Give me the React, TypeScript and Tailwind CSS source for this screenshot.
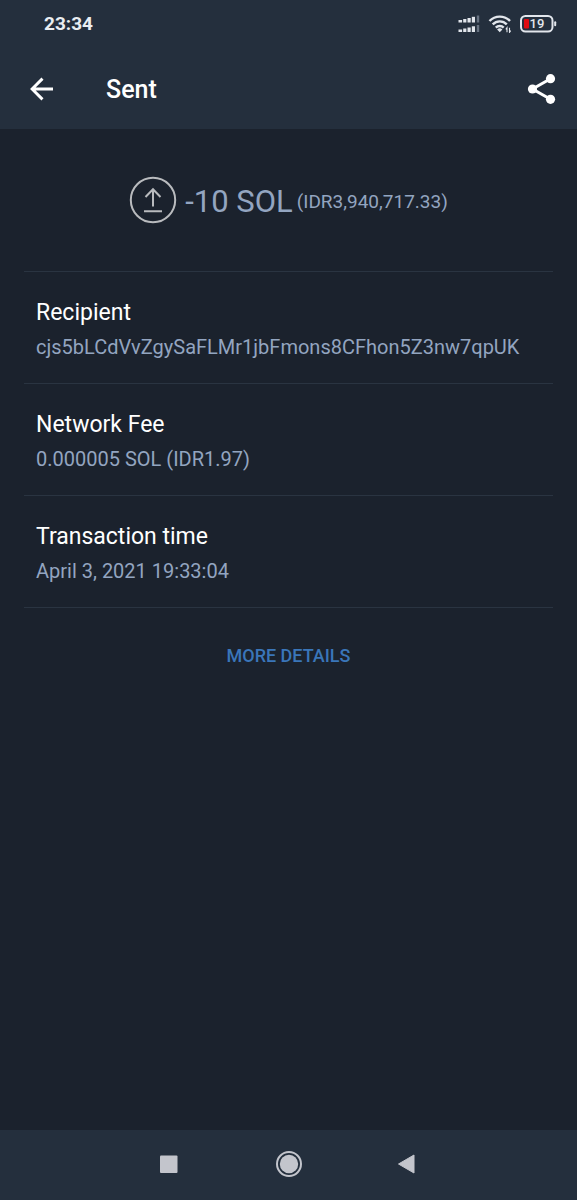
import React from 'react';

const details = [
  { label: 'Recipient', value: 'cjs5bLCdVvZgySaFLMr1jbFmons8CFhon5Z3nw7qpUK' },
  { label: 'Network Fee', value: '0.000005 SOL (IDR1.97)' },
  { label: 'Transaction time', value: 'April 3, 2021 19:33:04' },
];

function SignalIcon() {
  return (
    <svg width="22" height="18" viewBox="0 0 22 18" fill="#e2e6ec" aria-hidden="true">
      {[7.5, 17].map((base) => (
        <g key={base}>
          <rect x="0.5" y={base - 2.5} width="3.6" height="2.5" />
          <rect x="5.2" y={base - 3.5} width="3.2" height="3.5" />
          <rect x="9.5" y={base - 4.5} width="3.2" height="4.5" />
          <rect x="13.8" y={base - 5.7} width="3.2" height="5.7" />
          <rect x="18.8" y={base - 7} width="2.4" height="7" fill="#687382" />
        </g>
      ))}
    </svg>
  );
}

function WifiIcon() {
  return (
    <svg width="24" height="18" viewBox="0 0 24 18" fill="none" stroke="#e2e6ec" aria-hidden="true">
      <path d="M1.5 6a14.2 14.2 0 0 1 20.5 0" strokeWidth="2.4" />
      <path d="M4.7 9.4a9.8 9.8 0 0 1 14.1 0" strokeWidth="2.4" />
      <path d="M7.8 12.7a5.6 5.6 0 0 1 7.9 0" strokeWidth="2.4" />
      <path d="M11.75 17.2 9.1 14.6a3.8 3.8 0 0 1 5.3 0Z" fill="#e2e6ec" stroke="none" />
      <path d="M19 17.3v-4.6l-1.2 1.6M21.5 12.7v4.6l1.2-1.6" strokeWidth="1.1" />
    </svg>
  );
}

function BatteryIcon() {
  return (
    <svg width="37" height="18" viewBox="0 0 37 18" role="img" aria-label="Battery 19 percent">
      <rect x="1" y="1" width="31.5" height="15.5" rx="4.5" fill="none" stroke="#e2e6ec" strokeWidth="2" />
      <rect x="34.2" y="6.2" width="2" height="5" rx="1" fill="#e2e6ec" />
      <rect x="4" y="4" width="5" height="9.5" rx="1" fill="#e00a10" />
      <text x="17" y="13.4" textAnchor="middle" className="fill-[#e2e6ec] font-[Roboto,sans-serif] text-[13px] font-medium">
        19
      </text>
    </svg>
  );
}

export default function App() {
  return (
    <div className="flex min-h-screen flex-col bg-[#1b222d] font-[Roboto,sans-serif] text-white">
      <header className="bg-[#242f3d]">
        <div className="flex h-12 items-center justify-between pr-5 pl-11">
          <span className="text-[19px] leading-6 font-bold text-[#e9edf2]">23:34</span>
          <div className="flex items-center gap-2">
            <SignalIcon />
            <WifiIcon />
            <BatteryIcon />
          </div>
        </div>
        <div className="flex h-[81px] items-center pr-5 pl-7">
          <button type="button" aria-label="Back" className="p-px">
            <svg width="24" height="24" viewBox="0 0 24 24" fill="none" stroke="#fff" strokeWidth="2.9">
              <path d="M24 12H3M13.5 1.6 3.1 12l10.4 10.4" />
            </svg>
          </button>
          <h1 className="ml-[52px] flex-1 pt-0.5 text-[25px] leading-8 font-medium">Sent</h1>
          <button type="button" aria-label="Share">
            <svg width="30" height="30" viewBox="0 0 30 30" fill="#fff">
              <path d="M23.5 4.7 5.5 15l18 10.3" fill="none" stroke="#fff" strokeWidth="3" />
              <circle cx="23.5" cy="4.7" r="4.6" />
              <circle cx="5.5" cy="15" r="4.6" />
              <circle cx="23.5" cy="25.3" r="4.6" />
            </svg>
          </button>
        </div>
      </header>

      <main className="flex-1 px-6">
        <section className="flex h-[143px] items-center justify-center border-b border-[#2a3441] text-[#93a5c0]">
          <svg width="48" height="48" viewBox="0 0 48 48" fill="none" stroke="#b9bbbe" strokeWidth="2" aria-hidden="true">
            <circle cx="24" cy="24" r="22.2" />
            <path d="M24 30.5V13.5M16.5 21l7.5-7.7 7.5 7.7M15 35.3h18" />
          </svg>
          <p className="flex items-center gap-1 pt-1 pl-2">
            <span className="text-[31px] leading-10">-10 SOL</span>
            <span className="text-[19px] leading-8">(IDR3,940,717.33)</span>
          </p>
        </section>

        <dl>
          {details.map((item) => (
            <div key={item.label} className="border-b border-[#2a3441] px-3 pt-[25px] pb-5">
              <dt className="text-[23px] leading-8">{item.label}</dt>
              <dd className="mt-0.5 text-[20px] leading-8 break-all text-[#93a5c0]">{item.value}</dd>
            </div>
          ))}
        </dl>

        <div className="flex justify-center pt-8">
          <a href="#details" className="text-[18px] leading-8 font-medium text-[#3a76b9]">
            MORE DETAILS
          </a>
        </div>
      </main>

      <nav aria-label="System" className="flex h-[70px] items-center justify-center gap-[94px] bg-[#242f3d] pb-0.5">
        <button type="button" aria-label="Recent apps">
          <svg width="24" height="28" viewBox="0 0 24 28">
            <rect x="3" y="5.5" width="17.5" height="17.5" rx="1" fill="#c3c5cc" />
          </svg>
        </button>
        <button type="button" aria-label="Home">
          <svg width="28" height="28" viewBox="0 0 28 28">
            <circle cx="14" cy="14" r="12" fill="none" stroke="#c3c5cc" strokeWidth="2" />
            <circle cx="14" cy="14" r="9.2" fill="#c3c5cc" />
          </svg>
        </button>
        <button type="button" aria-label="Back">
          <svg width="24" height="28" viewBox="0 0 24 28">
            <path d="M1.5 14 17 5v18Z" fill="#c3c5cc" stroke="#c3c5cc" strokeLinejoin="round" />
          </svg>
        </button>
      </nav>
    </div>
  );
}
